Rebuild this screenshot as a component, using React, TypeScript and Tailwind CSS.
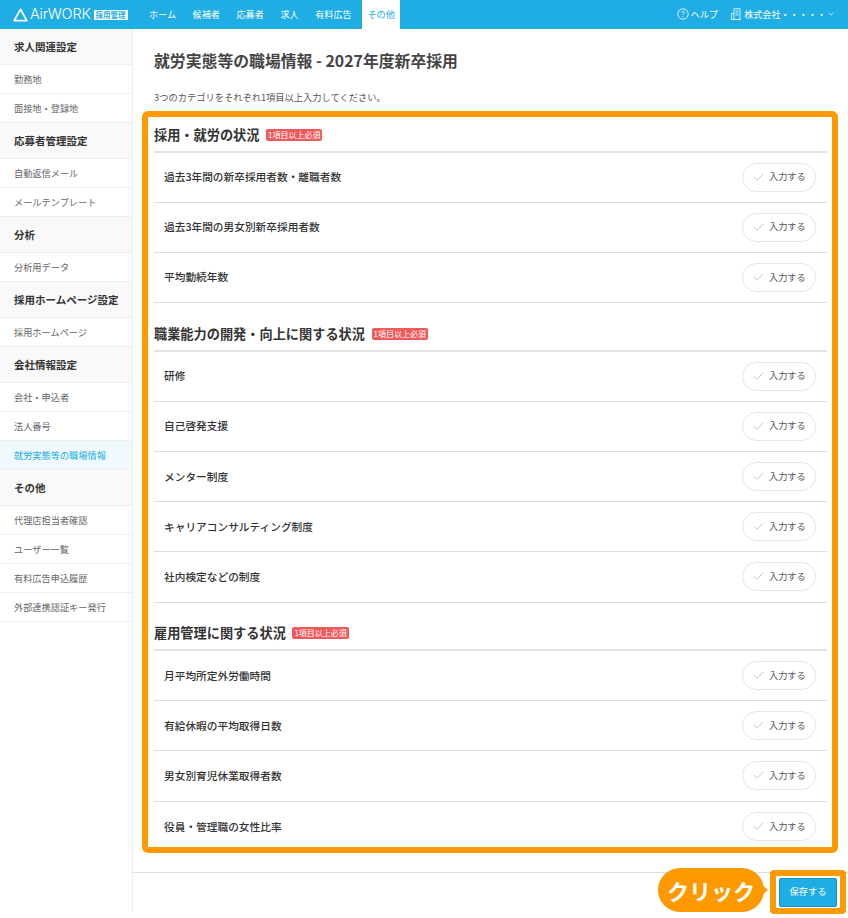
import { Check, ChevronDown } from "lucide-react";

const font = { fontFamily: '"Noto Sans CJK JP", sans-serif' };

const navItems = ["ホーム", "候補者", "応募者", "求人", "有料広告"];

const sideMenu = [
  { title: "求人関連設定", items: ["勤務地", "面接地・登録地"] },
  { title: "応募者管理設定", items: ["自動返信メール", "メールテンプレート"] },
  { title: "分析", items: ["分析用データ"] },
  { title: "採用ホームページ設定", items: ["採用ホームページ"] },
  { title: "会社情報設定", items: ["会社・申込者", "法人番号", "就労実態等の職場情報"] },
  { title: "その他", items: ["代理店担当者確認", "ユーザー一覧", "有料広告申込履歴", "外部連携認証キー発行"] },
];

const sections = [
  {
    title: "採用・就労の状況",
    rows: ["過去3年間の新卒採用者数・離職者数", "過去3年間の男女別新卒採用者数", "平均勤続年数"],
  },
  {
    title: "職業能力の開発・向上に関する状況",
    rows: ["研修", "自己啓発支援", "メンター制度", "キャリアコンサルティング制度", "社内検定などの制度"],
  },
  {
    title: "雇用管理に関する状況",
    rows: ["月平均所定外労働時間", "有給休暇の平均取得日数", "男女別育児休業取得者数", "役員・管理職の女性比率"],
  },
];

function Header() {
  return (
    <header className="flex h-[29px] shrink-0 items-center bg-[#20ade3] text-white">
      <div className="flex w-[149px] shrink-0 items-center pl-[13px]">
        <svg width="15" height="14" viewBox="0 0 15 14" fill="none" stroke="white" strokeWidth="1.8" strokeLinejoin="round">
          <path d="M7.5 1.4 L13.8 12.6 H1.2 Z" />
        </svg>
        <span className="ml-[2px] text-[14.5px] leading-none font-light tracking-[-0.2px]" style={{ fontFamily: '"Inter", sans-serif' }}>
          AirWORK
        </span>
        <span className="ml-[3px] bg-white px-[2px] text-[7.5px] leading-[10px] font-bold text-[#20ade3]">採用管理</span>
      </div>
      <nav className="flex h-full items-center text-[9.1px]">
        {navItems.map((item) => (
          <a key={item} className="mr-[16.6px]">
            {item}
          </a>
        ))}
        <a className="ml-[-6px] flex h-full w-[38px] items-center justify-center bg-white text-[#20ade3]">その他</a>
      </nav>
      <div className="ml-auto flex items-center pr-[13px] text-[9.1px]">
        <svg width="12" height="12" viewBox="0 0 12 12" fill="none" stroke="white" strokeWidth="0.8">
          <circle cx="6" cy="6" r="5.2" />
          <path d="M4.5 4.7 C4.5 2.9 7.5 2.9 7.5 4.6 C7.5 5.7 6 5.7 6 7" />
          <path d="M6 8.2 V9" />
        </svg>
        <span className="ml-[2px]">ヘルプ</span>
        <svg className="ml-[13px]" width="10" height="12" viewBox="0 0 10 12" fill="none" stroke="white" strokeWidth="0.8">
          <path d="M3 11.5 V0.7 H9 V11.5 M0.5 11.5 V5.5 H3 M0.5 11.5 H9.5 M4.5 3 H7.5 M4.5 5 H7.5 M4.5 7 H7.5" />
        </svg>
        <span className="ml-[3px]">株式会社・・・・・</span>
        <ChevronDown className="ml-[1px] h-[8px] w-[8px]" strokeWidth={2} />
      </div>
    </header>
  );
}

function Sidebar() {
  return (
    <aside className="w-[133px] shrink-0 border-r border-[#ececec]">
      {sideMenu.map((group) => (
        <div key={group.title}>
          <div className="flex h-[36px] items-center border-b border-[#eeeeee] bg-[#f9f9f9] pt-[1px] pl-[14px] text-[10.5px] font-bold text-[#333]">
            {group.title}
          </div>
          {group.items.map((item) => {
            const active = item === "就労実態等の職場情報";
            return (
              <div
                key={item}
                className={
                  active
                    ? "flex h-[29px] items-center border-b border-[#eeeeee] bg-[#eff9fe] pt-[1px] pl-[14px] text-[9.2px] text-[#20ade3]"
                    : "flex h-[29px] items-center border-b border-[#eeeeee] pt-[1px] pl-[14px] text-[9.2px] text-[#666]"
                }
              >
                {item}
              </div>
            );
          })}
        </div>
      ))}
    </aside>
  );
}

function InputButton() {
  return (
    <button className="flex h-[29px] w-[74px] items-center rounded-full border border-[#e6e6e6] bg-white pl-[9px] text-[9.2px] text-[#555]">
      <Check className="h-[13px] w-[13px] text-[#aaa]" strokeWidth={1.2} />
      <span className="ml-[4px]">入力する</span>
    </button>
  );
}

function Section({ title, rows, last }: { title: string; rows: string[]; last: boolean }) {
  return (
    <section className={last ? "" : "mb-[14.5px]"}>
      <div className="flex h-[34px] items-center border-b-2 border-[#e4e4e4]">
        <h2 className="text-[13.2px] font-bold text-[#333]">{title}</h2>
        <span className="ml-[6.5px] rounded-[2px] bg-[#f05a5a] px-[2px] text-[8px] leading-[12px] text-white">1項目以上必須</span>
      </div>
      {rows.map((row, i) => (
        <div
          key={row}
          className={
            last && i === rows.length - 1
              ? "flex h-[50.2px] items-center justify-between pr-[11px] pl-[10px]"
              : "flex h-[50.2px] items-center justify-between border-b border-[#dddddd] pr-[11px] pl-[10px]"
          }
        >
          <span className="text-[10.7px] font-medium text-[#333]">{row}</span>
          <InputButton />
        </div>
      ))}
    </section>
  );
}

export default function App() {
  return (
    <div className="relative flex h-[918px] w-[848px] flex-col overflow-hidden bg-white" style={font}>
      <Header />
      <div className="flex h-[883px] flex-none">
        <Sidebar />
        <main className="flex flex-1 flex-col">
          <div className="flex-1 pr-[10px] pl-[9px]">
            <h1 className="mt-[21px] pl-[12px] text-[15.85px] leading-[22px] font-bold text-[#444]">
              就労実態等の職場情報 - 2027年度新卒採用
            </h1>
            <p className="mt-[18px] pl-[12px] text-[9.25px] leading-[14px] text-[#555]">
              3つのカテゴリをそれぞれ1項目以上入力してください。
            </p>
            <div className="mt-[7px] h-[742px] rounded-[6px] border-[6px] border-[#ff9900] pt-[1.5px] pr-[5px] pl-[6px]">
              {sections.map((s, i) => (
                <Section key={s.title} title={s.title} rows={s.rows} last={i === sections.length - 1} />
              ))}
            </div>
          </div>
          <div className="h-[40px] shrink-0 border-t border-[#dddddd]" />
        </main>
      </div>

      {/* annotation overlays */}
      <div className="absolute top-[868px] left-[658px] flex h-[44px] w-[106px] items-center justify-center rounded-[22px] bg-[#ff9900] text-[22px] font-bold text-white">
        クリック
      </div>
      <div className="absolute top-[885px] left-[762px] h-0 w-0 border-y-[5px] border-l-[6px] border-y-transparent border-l-[#ff9900]" />
      <div className="absolute top-[870px] left-[770px] flex h-[44px] w-[76px] items-center justify-center rounded-[4px] border-[6px] border-[#ff9900] bg-white">
        <button className="h-[29px] w-[58px] rounded-[2px] border border-[#1a8fc0] bg-[#20ade3] text-[9.3px] text-white">保存する</button>
      </div>
    </div>
  );
}
